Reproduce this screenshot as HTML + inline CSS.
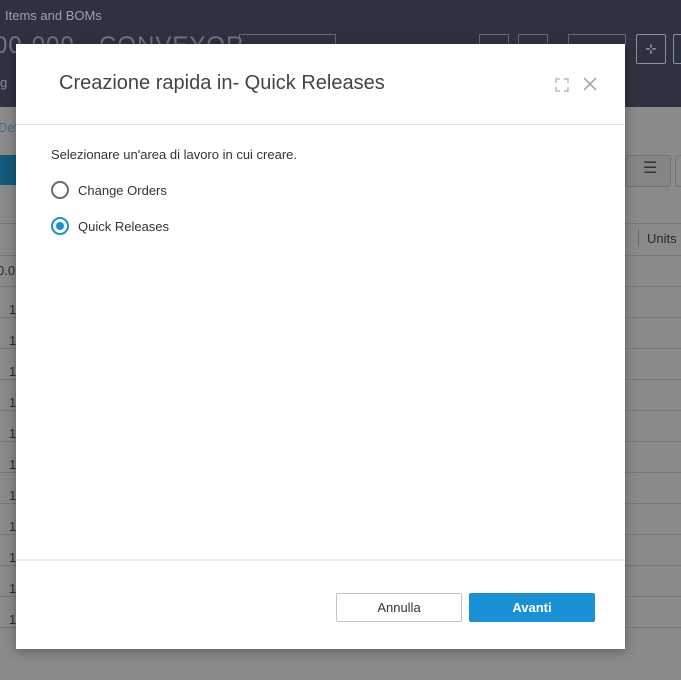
<!DOCTYPE html>
<html><head><style>
body{margin:0;width:681px;height:680px;overflow:hidden;background:#8a8a8a;font-family:"Liberation Sans",sans-serif;position:relative}
.hdr{position:absolute;left:0;top:0;width:681px;height:107px;background:#2e3240}
.abs{position:absolute}
.row{position:absolute;left:0;width:681px;height:1px;background:#787878}
.modal{position:absolute;left:16px;top:44px;width:609px;height:605px;background:#fff;box-shadow:0 2px 10px rgba(0,0,0,.35)}
.t{position:absolute;white-space:nowrap}
.radio{position:absolute;width:14px;height:14px;border:2px solid #6a6a6a;border-radius:50%}
.btn{position:absolute;top:549px;height:28px;width:124px;border-radius:2px;font-size:13px;text-align:center;line-height:28px}
</style></head><body>
<div class="hdr"></div>
<div class="t" style="left:5px;top:8px;color:#9aa0ab;font-size:13px">Items and BOMs</div>
<div class="t" style="left:-6px;top:32px;color:#707480;font-size:24px;letter-spacing:1px">00-000 - CONVEYOR</div>
<div class="abs" style="left:239px;top:34px;width:95px;height:10px;border:1px solid #666b78;border-bottom:none"></div>
<div class="abs" style="left:479px;top:34px;width:28px;height:10px;border:1px solid #666b78;border-bottom:none"></div>
<div class="abs" style="left:518px;top:34px;width:28px;height:10px;border:1px solid #666b78;border-bottom:none"></div>
<div class="abs" style="left:568px;top:34px;width:56px;height:10px;border:1px solid #666b78;border-bottom:none"></div>
<div class="abs" style="left:636px;top:34px;width:28px;height:28px;border:1px solid #8a8f9c;border-radius:2px;color:#c0c4cc;font-size:13px;text-align:center;line-height:28px">⊹</div>
<div class="abs" style="left:673px;top:34px;width:28px;height:28px;border:1px solid #8a8f9c;border-radius:2px"></div>
<div class="t" style="left:0;top:75px;color:#8a8f9c;font-size:13px">g</div>
<div class="t" style="left:-2px;top:120px;color:#3e6f86;font-size:13px">Det</div>
<div class="abs" style="left:0;top:155px;width:16px;height:30px;background:#145a7a"></div>
<div class="abs" style="left:625px;top:155px;width:44px;height:30px;border:1px solid #737373;border-radius:3px;background:#858585"></div>
<div class="t" style="left:643px;top:158px;font-size:16px;color:#333">☰</div>
<div class="abs" style="left:675px;top:155px;width:10px;height:30px;border:1px solid #737373;border-radius:3px"></div>
<div class="row" style="top:223px"></div>
<div class="abs" style="left:638px;top:229px;width:1px;height:18px;background:#666"></div>
<div class="t" style="left:647px;top:231px;font-size:13px;color:#2a2a2a">Units</div>
<div class="row" style="top:255px"></div><div class="row" style="top:286px"></div><div class="row" style="top:317px"></div><div class="row" style="top:348px"></div><div class="row" style="top:379px"></div><div class="row" style="top:410px"></div><div class="row" style="top:441px"></div><div class="row" style="top:472px"></div><div class="row" style="top:503px"></div><div class="row" style="top:534px"></div><div class="row" style="top:565px"></div><div class="row" style="top:596px"></div><div class="row" style="top:627px"></div>
<div class="t" style="left:-3px;top:263px;font-size:13px;color:#2a2a2a">0.0</div>
<div class="t" style="left:9px;top:294px;font-size:13px;color:#2a2a2a;line-height:31px">1<br>1<br>1<br>1<br>1<br>1<br>1<br>1<br>1<br>1<br>1</div>
<div class="modal">
<div class="t" style="left:43px;top:28px;font-size:20px;color:#444">Creazione rapida in- Quick Releases</div>
<svg class="abs" style="left:539px;top:34px" width="14" height="14" viewBox="0 0 14 14" fill="none" stroke="#bbb" stroke-width="1.5"><path d="M1 5V1h4M9 1h4v4M13 9v4H9M5 13H1V9"/></svg>
<svg class="abs" style="left:567px;top:33px" width="14" height="14" viewBox="0 0 14 14" stroke="#aaa" stroke-width="1.6"><path d="M1 1L13 13M13 1L1 13"/></svg>
<div class="abs" style="left:0;top:80px;width:609px;height:1px;background:#e4e4e4"></div>
<div class="t" style="left:35px;top:103px;font-size:13px;color:#333">Selezionare un'area di lavoro in cui creare.</div>
<div class="radio" style="left:35px;top:137px"></div>
<div class="t" style="left:62px;top:139px;font-size:13px;color:#333">Change Orders</div>
<div class="radio" style="left:35px;top:173px;border-color:#1a8fd6"><div style="position:absolute;left:3px;top:3px;width:8px;height:8px;border-radius:50%;background:#1a8fd6"></div></div>
<div class="t" style="left:62px;top:175px;font-size:13px;color:#333">Quick Releases</div>
<div class="abs" style="left:0;top:515px;width:609px;height:2px;background:#eee"></div>
<div class="btn" style="left:320px;border:1px solid #bcc3cc;color:#333;height:27px;line-height:27px">Annulla</div>
<div class="btn" style="left:453px;background:#1a91d6;color:#fff;font-weight:bold;width:126px;height:29px;line-height:29px">Avanti</div>
</div>
</body></html>
